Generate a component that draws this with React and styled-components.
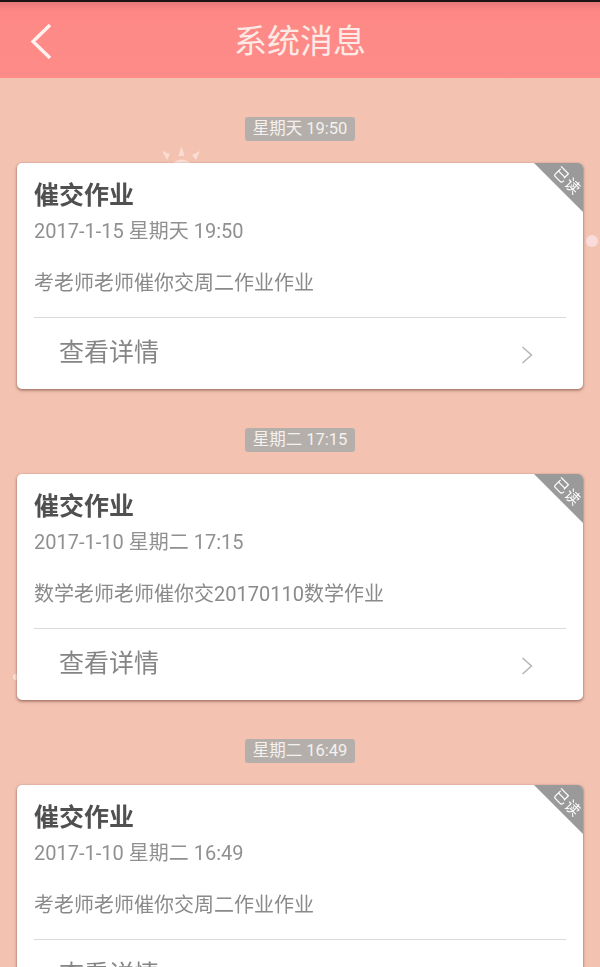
import React from "react";
import styled, { createGlobalStyle } from "styled-components";

const Global = createGlobalStyle`
  html, body { margin: 0; padding: 0; background: #f3c2b1; }
  body { font-family: "Roboto", "Noto Sans CJK SC", sans-serif; }
`;

const Page = styled.div`
  position: relative;
  width: 600px;
  height: 967px;
  overflow: hidden;
  background: #f3c2b1;
`;

const Header = styled.header`
  position: relative;
  height: 78px;
  box-sizing: border-box;
  padding-top: 4px;
  display: flex;
  align-items: center;
  justify-content: center;
  background: linear-gradient(#e87a7a 0, #fb8684 8px, #fe8a87 22px, #fe8b88 100%);
  border-top: 2px solid #1c1414;
`;

const BackButton = styled.svg`
  position: absolute;
  left: 29px;
  top: 20px;
  width: 26px;
  height: 38px;
`;

const Title = styled.h1`
  margin: 0;
  font-size: 33px;
  font-weight: 400;
  line-height: 40px;
  color: #fdeae6;
`;

const Feed = styled.main`
  display: flex;
  flex-direction: column;
  align-items: center;
  padding-top: 39px;
`;

const Group = styled.section`
  display: flex;
  flex-direction: column;
  align-items: center;
  margin-bottom: 39px;
`;

const TimePill = styled.div`
  width: 110px;
  height: 24px;
  border-radius: 3px;
  background: #b4afab;
  color: #f5f1ef;
  font-size: 16.5px;
  line-height: 23px;
  text-align: center;
  white-space: nowrap;
`;

const Card = styled.article`
  position: relative;
  box-sizing: border-box;
  width: 566px;
  height: 226px;
  margin-top: 22px;
  padding: 0 17px;
  background: #fff;
  border-radius: 5px;
  overflow: hidden;
  box-shadow: 0 1px 3px rgba(120, 70, 60, 0.55);
  display: flex;
  flex-direction: column;
`;

const CardShell = styled.div`
  position: relative;
  filter: drop-shadow(0 1px 1px rgba(130, 80, 70, 0.35));
`;

const CardTitle = styled.h2`
  margin: 16px 0 0;
  font-size: 25px;
  font-weight: 700;
  line-height: 34px;
  color: #505050;
`;

const DateLine = styled.div`
  margin-top: 3px;
  font-size: 20px;
  line-height: 30px;
  color: #909090;
`;

const Body = styled.p`
  margin: 22px 0 0;
  font-size: 20px;
  line-height: 31px;
  color: #8a8a8a;
  white-space: nowrap;
`;

const Footer = styled.div`
  margin-top: 18px;
  border-top: 1px solid #d9d9d9;
  height: 71px;
  display: flex;
  align-items: center;
  justify-content: space-between;
  padding: 0 32px 1px 25px;
`;

const FooterLabel = styled.span`
  font-size: 25px;
  font-weight: 400;
  line-height: 34px;
  color: #858585;
  white-space: nowrap;
`;

const Chevron = styled.svg`
  width: 13px;
  height: 18px;
  margin-top: 4px;
`;

const Ribbon = styled.div`
  position: absolute;
  top: 0;
  right: 0;
  width: 49px;
  height: 49px;
  background: #9a9a9a;
  clip-path: polygon(0 0, 100% 0, 100% 100%);
`;

const RibbonText = styled.span`
  position: absolute;
  top: 9px;
  right: -3px;
  width: 38px;
  font-size: 15px;
  font-weight: 400;
  letter-spacing: 1px;
  line-height: 18px;
  text-align: center;
  color: #fff;
  transform: rotate(45deg);
  white-space: nowrap;
`;

const SunRays = styled.svg`
  position: absolute;
  left: 160px;
  top: 144px;
  width: 44px;
  height: 20px;
`;

const Dot = styled.div`
  position: absolute;
  left: ${(p) => p.$x}px;
  top: ${(p) => p.$y}px;
  width: ${(p) => p.$size}px;
  height: ${(p) => p.$size}px;
  border-radius: 50%;
  background: ${(p) => p.$color};
`;

const messages = [
  { pill: "星期天 19:50", date: "2017-1-15 星期天 19:50", body: "考老师老师催你交周二作业作业" },
  { pill: "星期二 17:15", date: "2017-1-10 星期二 17:15", body: "数学老师老师催你交20170110数学作业" },
  { pill: "星期二 16:49", date: "2017-1-10 星期二 16:49", body: "考老师老师催你交周二作业作业" },
];

export default function App() {
  return (
    <Page>
      <Global />
      <Header>
        <BackButton viewBox="0 0 26 38" fill="none">
          <path d="M21 3 L4 19.5 L21 36" stroke="#fff3f0" strokeWidth="3.4" />
        </BackButton>
        <Title>系统消息</Title>
      </Header>
      <SunRays viewBox="0 0 44 20" fill="#fbdcd3">
        <polygon points="2,7 10,10 7,16" />
        <polygon points="21.5,2 24.5,12 18.5,12" />
        <polygon points="40,7 36,16 32,11" />
        <path d="M12 20 Q21 11 32 20 Z" />
      </SunRays>
      <Dot $x={586} $y={235} $size={12} $color="#f9dbdc" />
      <Dot $x={13} $y={674} $size={6} $color="#fbe2da" />
      <Feed>
        {messages.map((m) => (
          <Group key={m.pill}>
            <TimePill>{m.pill}</TimePill>
            <CardShell>
              <Card>
                <CardTitle>催交作业</CardTitle>
                <DateLine>{m.date}</DateLine>
                <Body>{m.body}</Body>
                <Footer>
                  <FooterLabel>查看详情</FooterLabel>
                  <Chevron viewBox="0 0 13 18" fill="none">
                    <path d="M1.5 1 L10.5 9 L1.5 17" stroke="#b5b5b5" strokeWidth="1.5" />
                  </Chevron>
                </Footer>
                <Ribbon>
                  <RibbonText>已读</RibbonText>
                </Ribbon>
              </Card>
            </CardShell>
          </Group>
        ))}
      </Feed>
    </Page>
  );
}
